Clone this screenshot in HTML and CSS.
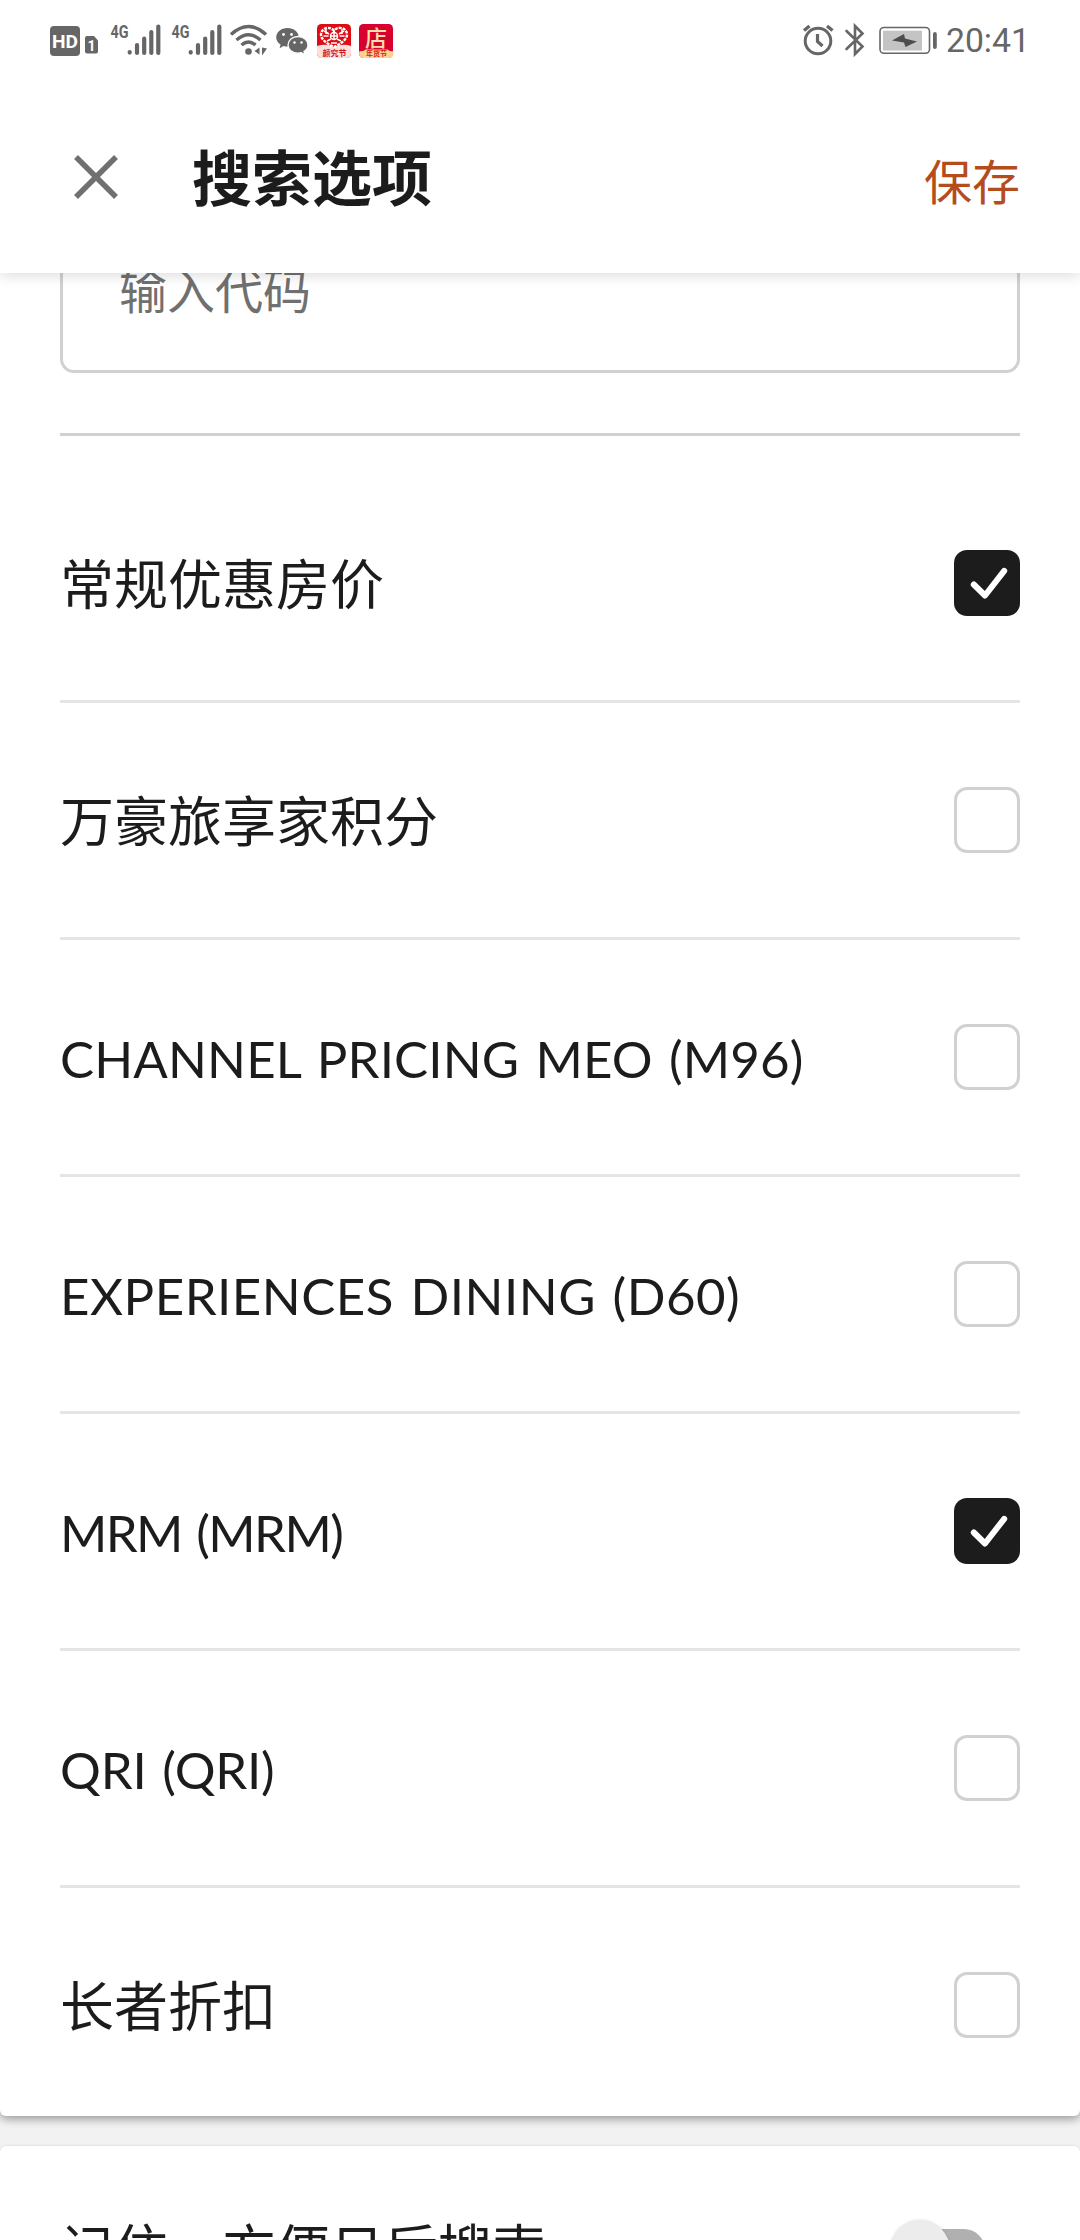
FILE: index.html
```html
<!DOCTYPE html>
<html lang="zh-CN">
<head>
<meta charset="utf-8">
<title>搜索选项</title>
<link rel="stylesheet" href="styles.css">
</head>
<body>
<div class="screen">
  <header class="header">
    <div class="status">
      <svg class="status-left" width="350" height="40" viewBox="50 20 350 40">
        <rect x="50" y="26" width="30" height="30" rx="4" fill="#666"/>
        <text class="hd" x="52" y="47.800" textLength="26" lengthAdjust="spacingAndGlyphs">HD</text>
        <path d="M87 36h7l4 4.500v11a2 2 0 0 1-2 2h-9a2 2 0 0 1-2-2v-13.500a2 2 0 0 1 2-2z" fill="#666"/>
        <text class="sim" x="87.500" y="51">1</text>
        <g id="signal">
          <text class="net" x="110.500" y="37.800" textLength="18" lengthAdjust="spacingAndGlyphs">4G</text>
          <path d="M129.700 52v.600M137 45v8M144.200 38.500v14.500M151.300 32v21M158.300 26.500v26.500" stroke="#666" stroke-width="4.200" stroke-linecap="round"/>
        </g>
        <use href="#signal" x="61"/>
        <g fill="none" stroke="#666" stroke-width="3.400">
          <path d="M231 34.500Q248.500 18.500 266 34.500"/>
          <path d="M236.500 40Q248.500 29.500 260.500 40"/>
          <path d="M241.500 45Q248.500 39 255.500 45"/>
        </g>
        <circle cx="248.500" cy="51.500" r="3.300" fill="#666"/>
        <path d="M259.500 47.500v7l-5-3.500zM262 47.500v8l5-7z" fill="#666"/>
        <path d="M287.500 28c-6.300 0-11.300 4.100-11.300 9.300 0 3.100 1.800 5.700 4.400 7.300l-1 3.600 4-2.200c1.200.400 2.600.600 3.900.600 6.300 0 11.300-4.200 11.300-9.300S293.800 28 287.500 28z" fill="#666"/>
        <path d="M298 36.500c-5.600 0-10 3.800-10 8.400s4.400 8.300 10 8.300c1.200 0 2.400-.200 3.400-.500l3.500 2-.900-3.300c2.400-1.500 4-3.900 4-6.500 0-4.600-4.400-8.400-10-8.400z" fill="#666" stroke="#fff" stroke-width="1.300"/>
        <g fill="#fff"><circle cx="283.500" cy="34.500" r="1.400"/><circle cx="291.500" cy="34.500" r="1.400"/><circle cx="294.500" cy="42.500" r="1.200"/><circle cx="301.500" cy="42.500" r="1.200"/></g>
        <rect x="317" y="24" width="34" height="34" rx="4.500" fill="#dc0d15"/>
        <path d="M317 46q9-3 17 1 9-4 17-1v7.500a4.500 4.500 0 0 1-4.500 4.500h-25a4.500 4.500 0 0 1-4.500-4.500z" fill="#fde0dd"/>
        <g fill="none" stroke="#fff" stroke-width="1.500">
          <path d="M334 31c-3-5-12-4-13 3-.500 5 6 10 13 13 7-3 13.500-8 13-13-1-7-10-8-13-3z" stroke-width="2.400" stroke-dasharray="3 1"/>
          <circle cx="334" cy="36" r="3.500"/>
          <path d="M330.500 36h7M334 32.500v7M324 31l5 3M344 31l-5 3M323.500 36h5M344.500 36h-5M327 41l4-2M341 41l-4-2M326 29v5M342 29v5M331 43h6"/>
        </g>
        <text class="tag red" x="322.500" y="56">颜究节</text>
        <rect x="359" y="24" width="34" height="34" rx="4.500" fill="#d8002f"/>
        <path d="M359.500 51q4 1 6-1.500h22q2 2.500 6 1.500v2.500a4.500 4.500 0 0 1-4.500 4.500h-25.500a4.500 4.500 0 0 1-4.500-4.500z" fill="#fbd28f"/>
        <text class="shop" x="365" y="46">店</text>
        <text class="tag small red" x="366" y="56">年货节</text>
      </svg>
      <div class="status-right">
        <svg width="136" height="40" viewBox="802 20 136 40">
          <g fill="none" stroke="#666" stroke-width="3">
            <circle cx="818" cy="41" r="12.800"/>
            <path d="M817.500 34v7.500l5 4.500" stroke-width="3.200"/>
            <path d="M804 30.500l5.500-4.500M832.500 30.500L827 26" stroke-width="3.400"/>
            <path d="M846.500 31l16 15.500-7.500 7.500v-28l7.500 7.500-16 15.500" stroke-width="2.600" stroke-linecap="round"/>
            <rect x="880" y="27.500" width="49.500" height="25.800" rx="4" stroke-width="1.600"/>
          </g>
          <rect x="883" y="30.700" width="39" height="19.800" fill="#c4c4c4"/>
          <path d="M892 40.500l12-6.500 1 4.500 12 3-11.500 5.500-1.500-4.500z" fill="#4d4d4d"/>
          <rect x="933" y="32" width="3.800" height="17" rx="1.900" fill="#666"/>
        </svg>
        <span class="time">20:41</span>
      </div>
    </div>
    <div class="toolbar">
      <svg class="close" width="44" height="44" viewBox="0 0 44 44"><path d="M2 2l40 40M42 2L2 42" stroke="#707070" stroke-width="5.500"/></svg>
      <h1 class="title">搜索选项</h1>
      <span class="save">保存</span>
    </div>
  </header>
  <main>
    <section class="card">
      <div class="code-input">输入代码</div>
      <ul class="options">
        <li class="option"><span class="label">常规优惠房价</span><span class="check on"><svg width="66" height="66" viewBox="0 0 66 66"><path d="M19.800 34.500L31 45.500 50.200 20.800"/></svg></span></li>
        <li class="option"><span class="label">万豪旅享家积分</span><span class="check"></span></li>
        <li class="option"><span class="label latin">CHANNEL PRICING MEO (M96)</span><span class="check"></span></li>
        <li class="option"><span class="label latin loose">EXPERIENCES DINING (D60)</span><span class="check"></span></li>
        <li class="option"><span class="label latin tight">MRM (MRM)</span><span class="check on"><svg width="66" height="66" viewBox="0 0 66 66"><path d="M19.800 34.500L31 45.500 50.200 20.800"/></svg></span></li>
        <li class="option"><span class="label latin snug">QRI (QRI)</span><span class="check"></span></li>
        <li class="option"><span class="label">长者折扣</span><span class="check"></span></li>
      </ul>
    </section>
    <section class="card remember">
      <span class="label">记住，方便日后搜索</span>
      <span class="toggle"><span class="knob"></span></span>
    </section>
  </main>
</div>
</body>
</html>
```
FILE: styles.css
```css
* { box-sizing: border-box; }
body { margin: 0; }

.screen {
  width: 1080px;
  height: 2240px;
  overflow: hidden;
  background: #f2f2f2;
  color: #1c1c1c;
  font-family: "Noto Sans CJK SC", sans-serif;
  display: flex;
  flex-direction: column;
}

.header {
  position: relative;
  z-index: 1;
  flex: none;
  height: 273px;
  background: #fff;
  box-shadow: 0 2px 14px rgba(0, 0, 0, .15);
}

.status {
  display: flex;
  justify-content: space-between;
  height: 80px;
  padding: 20px 54px 0 50px;
}
.status-right { display: flex; }
.time {
  width: 88px;
  padding-left: 8px;
  font: 33.7px/42px Roboto, sans-serif;
  color: #666;
  white-space: nowrap;
}
.hd { font: bold 19px Roboto, sans-serif; fill: #fff; }
.sim { font: bold 14px Roboto, sans-serif; fill: #fff; }
.net { font: bold 18px "Roboto", sans-serif; fill: #666; }
.tag { font: bold 8px "Noto Sans CJK SC", sans-serif; }
.small { font-size: 7px; }
.red { fill: #d21a20; }
.shop { font: 500 22px "Noto Sans CJK SC", sans-serif; fill: #fbe0a8; }

.toolbar {
  display: flex;
  align-items: center;
  height: 193px;
  padding: 0 60px 0 74px;
}
.close { margin-top: 1px; }
.title {
  margin: 0 0 3px 74px;
  font-size: 60px;
  line-height: 90px;
  font-weight: 700;
}
.save {
  margin: 5px 0 0 auto;
  font-size: 48px;
  line-height: 72px;
  color: #b44d1b;
}

main {
  display: flex;
  flex-direction: column;
  gap: 30px;
}
.card {
  padding: 0 60px;
  background: #fff;
  border-radius: 0 0 6px 6px;
  box-shadow: 0 3px 10px rgba(0, 0, 0, .38);
}
.code-input {
  height: 100px;
  padding: 0 56px;
  border: 3px solid #d1d1d1;
  border-top: 0;
  border-radius: 0 0 14px 14px;
  font-size: 48px;
  line-height: 30px;
  color: #707070;
}
.options {
  list-style: none;
  margin: 60px 0 0;
  padding: 30px 0 0;
  border-top: 3px solid #d1d1d1;
}
.option {
  display: flex;
  align-items: center;
  justify-content: space-between;
  height: 237px;
  border-bottom: 3px solid #e5e5e5;
}
.option:last-child { height: 228px; padding-top: 6px; border: 0; }
.label {
  margin-bottom: 3px;
  font-size: 54px;
  line-height: 80px;
  white-space: nowrap;
}
.latin {
  margin: 3px 0 0;
  font-family: Lato, sans-serif;
  font-size: 51px;
  letter-spacing: .15px;
  word-spacing: 3px;
}
.loose { letter-spacing: .5px; }
.tight { letter-spacing: -1.6px; }
.snug { letter-spacing: -.2px; }
.check {
  width: 66px;
  height: 66px;
  border: 3px solid #d1d1d1;
  border-radius: 13px;
}
.on { border: 0; background: #1c1c1c; }
.on path {
  fill: none;
  stroke: #fff;
  stroke-width: 6;
  stroke-linecap: round;
  stroke-linejoin: round;
}
.on svg { display: block; }

.remember {
  display: flex;
  justify-content: space-between;
  height: 240px;
  padding-top: 61px;
  border-radius: 6px;
  box-shadow: 0 0 3px rgba(0, 0, 0, .12);
}
.toggle {
  display: flex;
  align-items: center;
  width: 84px;
  height: 42px;
  margin: 22px 35px 0 0;
  border-radius: 21px;
  background: #b0b0b0;
}
.knob {
  flex: none;
  width: 60px;
  height: 60px;
  margin-left: -11px;
  border-radius: 50%;
  background: #ececec;
  box-shadow: 0 0 3px rgba(0, 0, 0, .12);
}
```
